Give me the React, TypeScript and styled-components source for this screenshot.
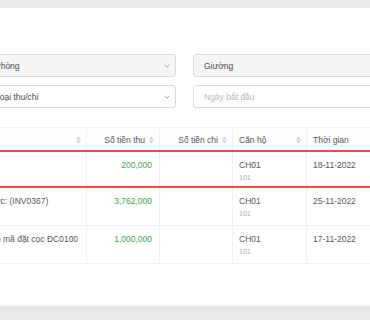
import React from 'react'
import styled, { createGlobalStyle } from 'styled-components'

interface RowData {
  desc: string
  income: string
  expense: string
  room: string
  roomSub: string
  date: string
  highlight?: boolean
}

const rows: RowData[] = [
  { desc: 'Tiền phòng', income: '200,000', expense: '', room: 'CH01', roomSub: '101', date: '18-11-2022', highlight: true },
  { desc: 'Phí điện nước: (INV0367)', income: '3,762,000', expense: '', room: 'CH01', roomSub: '101', date: '25-11-2022' },
  { desc: 'Thu tiền theo mã đặt cọc ĐC0100', income: '1,000,000', expense: '', room: 'CH01', roomSub: '101', date: '17-11-2022' },
]

const columns = [
  { title: '', align: 'left' },
  { title: 'Số tiền thu', align: 'right' },
  { title: 'Số tiền chi', align: 'right' },
  { title: 'Căn hộ', align: 'left' },
  { title: 'Thời gian', align: 'left', noSorter: true },
]

const GlobalStyle = createGlobalStyle`
  html, body {
    margin: 0;
    padding: 0;
    background: #e8e8e8;
  }
  body {
    font-family: "Liberation Sans", Arial, sans-serif;
    overflow: hidden;
  }
`

const SortIcon = () => (
  <svg width="5" height="8" viewBox="0 0 5 8">
    <path d="M0 3.4 L2.5 0.6 L5 3.4 Z" fill="#cfcfcf" />
    <path d="M0 4.6 L2.5 7.4 L5 4.6 Z" fill="#cfcfcf" />
  </svg>
)

const Chevron = () => (
  <svg width="6" height="4" viewBox="0 0 6 4">
    <path d="M0.6 0.8 L3 3 L5.4 0.8" stroke="#9a9a9a" strokeWidth="0.9" fill="none" />
  </svg>
)

const App = () => {
  return (
    <>
      <GlobalStyle />
      <StyledPage>
        <StyledPanel>
          <StyledFilters>
            <StyledSelect $muted>
              <StyledSelectText>Phòng</StyledSelectText>
              <Chevron />
            </StyledSelect>
            <StyledSelect $muted>
              <StyledSelectText>Giường</StyledSelectText>
            </StyledSelect>
            <StyledSelect>
              <StyledSelectText>Loại thu/chi</StyledSelectText>
              <Chevron />
            </StyledSelect>
            <StyledSelect>
              <StyledSelectText $placeholder>Ngày bắt đầu</StyledSelectText>
            </StyledSelect>
          </StyledFilters>

          <StyledTable>
            <StyledHeadRow>
              {columns.map((c, idx) => (
                <StyledHeadCell key={idx}>
                  <StyledHeadTitle $align={c.align}>{c.title}</StyledHeadTitle>
                  {!c.noSorter && <SortIcon />}
                </StyledHeadCell>
              ))}
            </StyledHeadRow>
            {rows.map((r, idx) => (
              <StyledRow key={idx} $highlight={r.highlight}>
                <StyledCell>{r.desc}</StyledCell>
                <StyledCell $align="right" $money>{r.income}</StyledCell>
                <StyledCell $align="right" $money>{r.expense}</StyledCell>
                <StyledCell>
                  {r.room}
                  <StyledSub>{r.roomSub}</StyledSub>
                </StyledCell>
                <StyledCell $last>{r.date}</StyledCell>
              </StyledRow>
            ))}
          </StyledTable>
        </StyledPanel>
      </StyledPage>
    </>
  )
}

const StyledPage = styled.div`
  width: 370px;
  height: 320px;
  padding: 8px 0 14px;
  box-sizing: border-box;
  overflow: hidden;
`

const StyledPanel = styled.section`
  background: #fff;
  height: 298px;
  overflow: hidden;
  padding-top: 46px;
  box-sizing: border-box;
`

const StyledFilters = styled.div`
  margin-left: -16px;
  display: grid;
  grid-template-columns: 192px 192px;
  column-gap: 17px;
  row-gap: 8px;
`

const StyledSelect = styled.div<{ $muted?: boolean }>`
  height: 23px;
  box-sizing: border-box;
  border: 1px solid #d9d9d9;
  border-radius: 3px;
  background: ${p => (p.$muted ? '#f5f5f5' : '#fff')};
  display: flex;
  align-items: center;
  padding: 0 5px 0 10px;
  svg {
    margin-left: auto;
  }
`

const StyledSelectText = styled.span<{ $placeholder?: boolean }>`
  font-size: 8.5px;
  color: ${p => (p.$placeholder ? '#b8b8b8' : '#4a4a4a')};
`

const StyledTable = styled.div`
  margin-top: 19px;
  margin-left: -55px;
  width: 470px;
`

const gridCols = '142px 73px 73px 74px 108px'

const StyledHeadRow = styled.div`
  display: grid;
  grid-template-columns: ${gridCols};
  height: 23px;
  box-sizing: border-box;
  border-top: 1px solid #f0f0f0;
  background: #fdfdfd;
`

const StyledHeadCell = styled.div`
  display: flex;
  align-items: center;
  gap: 4px;
  padding: 1px 5px 0 6px;
  border-right: 1px solid #f0f0f0;
  font-size: 8.5px;
  color: #555555;
  &:last-child {
    border-right: none;
  }
`

const StyledHeadTitle = styled.span<{ $align: string }>`
  flex: 1;
  text-align: ${p => p.$align};
`

const StyledRow = styled.div<{ $highlight?: boolean }>`
  display: grid;
  grid-template-columns: ${gridCols};
  height: 38px;
  box-sizing: border-box;
  border-top: ${p => (p.$highlight ? '2px solid #f24e3e' : 'none')};
  border-bottom: ${p => (p.$highlight ? '2px solid #f24e3e' : '1px solid #f0f0f0')};
`

const StyledCell = styled.div<{ $align?: string; $money?: boolean; $last?: boolean }>`
  padding: 7px 7px 0 6px;
  font-size: 8.5px;
  line-height: 12px;
  white-space: nowrap;
  text-align: ${p => p.$align || 'left'};
  color: ${p => (p.$money ? '#3f9f4f' : '#555555')};
  border-right: ${p => (p.$last ? 'none' : '1px solid #f0f0f0')};
  overflow: hidden;
`

const StyledSub = styled.div`
  font-size: 7px;
  line-height: 10px;
  margin-top: 2px;
  color: #ababab;
`

export default App
